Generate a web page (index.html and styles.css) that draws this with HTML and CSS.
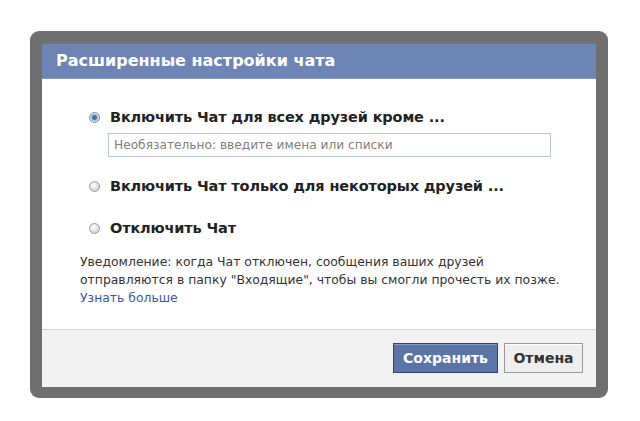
FILE: index.html
```html
<!DOCTYPE html>
<html lang="ru">
<head>
<meta charset="utf-8">
<link rel="stylesheet" href="styles.css">
</head>
<body>
<div class="frame">
  <div class="dialog">
    <div class="header">Расширенные настройки чата</div>
    <div class="body">
      <div class="option">
        <span class="radio checked"></span>
        <span class="label">Включить Чат для всех друзей кроме ...</span>
      </div>
      <div class="field">Необязательно: введите имена или списки</div>
      <div class="option second">
        <span class="radio"></span>
        <span class="label">Включить Чат только для некоторых друзей ...</span>
      </div>
      <div class="option third">
        <span class="radio"></span>
        <span class="label">Отключить Чат</span>
      </div>
      <p class="notice">Уведомление: когда Чат отключен, сообщения ваших друзей<br>отправляются в папку "Входящие", чтобы вы смогли прочесть их позже.<br><a class="link" href="#">Узнать больше</a></p>
    </div>
    <div class="footer">
      <button class="btn primary">Сохранить</button>
      <button class="btn secondary">Отмена</button>
    </div>
  </div>
</div>
</body>
</html>
```

FILE: styles.css
```css
html, body {
  margin: 0;
  padding: 0;
  background: #ffffff;
}

body {
  font-family: "DejaVu Sans", "Liberation Sans", sans-serif;
  color: #333333;
  width: 640px;
  height: 421px;
  overflow: hidden;
}

.frame {
  margin: 31px 0 0 30px;
  width: 578px;
  box-sizing: border-box;
  padding: 12px 12px 11px 12px;
  background: #6f6f6f;
  border-radius: 9px;
}

.dialog {
  background: #ffffff;
  display: flex;
  flex-direction: column;
}

.header {
  height: 36px;
  box-sizing: border-box;
  background: #6d84b4;
  border-top: 1px solid #5f77ab;
  border-bottom: 1px solid #8397c1;
  color: #ffffff;
  font-weight: bold;
  font-size: 16px;
  line-height: 33px;
  padding-left: 14px;
}

.body {
  height: 250px;
  box-sizing: border-box;
  padding: 29px 0 0 38px;
}

.option {
  display: flex;
  align-items: center;
  height: 18px;
  gap: 10px;
}

.option.second {
  margin-top: 20px;
}

.option.third {
  margin-top: 24px;
}

.radio {
  width: 11px;
  height: 11px;
  border-radius: 50%;
  box-sizing: border-box;
  border: 1px solid #9d9d9d;
  background: radial-gradient(circle at 40% 35%, #ffffff 0%, #dcdcdc 60%, #bdbdbd 100%);
  flex: none;
  margin-left: 9px;
}

.radio.checked {
  border-color: #8a8a8a;
  background: radial-gradient(circle at 50% 50%, #1e6fb8 0%, #2f7cc0 30%, #9cbbd8 48%, #e0e0e0 62%, #c8c8c8 100%);
}

.label {
  font-weight: bold;
  font-size: 14.5px;
  color: #222222;
  letter-spacing: -0.15px;
}

.field {
  margin: 7px 0 0 28px;
  width: 443px;
  height: 24px;
  box-sizing: border-box;
  border: 1px solid #bdc7d8;
  font-size: 12.2px;
  color: #808080;
  line-height: 22px;
  padding-left: 5px;
}

.notice {
  margin: 16px 0 0 0;
  font-size: 12.4px;
  line-height: 18px;
  color: #333333;
}

.link {
  color: #3b5998;
  text-decoration: none;
}

.footer {
  height: 58px;
  box-sizing: border-box;
  background: #f2f2f2;
  border-top: 1px solid #d4d4d4;
  display: flex;
  justify-content: flex-end;
  align-items: flex-start;
  gap: 6px;
  padding: 13px 13px 0 0;
}

.btn {
  height: 30px;
  box-sizing: border-box;
  font-family: "DejaVu Sans", "Liberation Sans", sans-serif;
  font-weight: bold;
  font-size: 14px;
  padding: 0;
  margin: 0;
  cursor: pointer;
}

.primary {
  width: 105px;
  background: #5b74a8;
  border: 1px solid #29447e;
  box-shadow: inset 0 1px 0 #8a9cc2;
  color: #ffffff;
}

.secondary {
  width: 79px;
  background: #eeeeee;
  border: 1px solid #999999;
  box-shadow: inset 0 1px 0 #ffffff;
  color: #333333;
}
```
